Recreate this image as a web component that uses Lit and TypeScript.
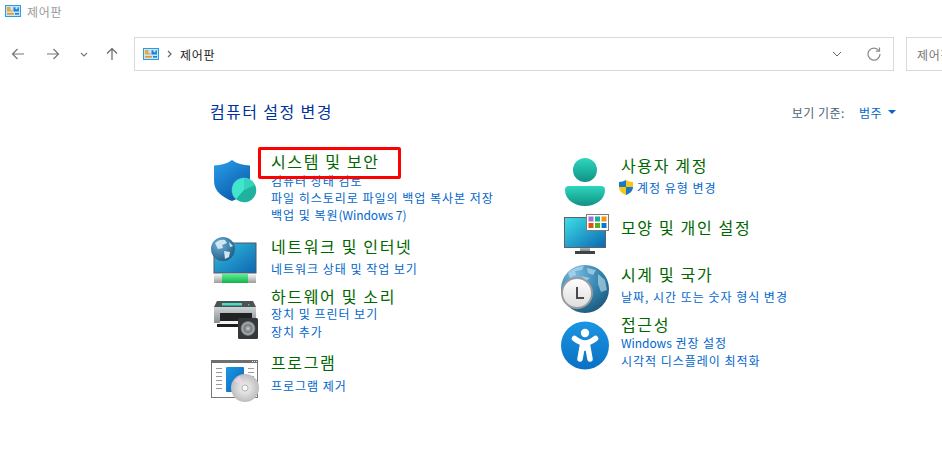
import { LitElement, html, css, svg } from "lit";
import { customElement } from "lit/decorators.js";

const cpIcon = html`<svg class="cp" viewBox="0 0 16 12" width="16" height="12">
  <rect x="0.5" y="0.5" width="15" height="11" fill="#c3e8fb" stroke="#2a9be0"/>
  <path d="M2 2h3.5v3.2h2.2v1.3H2z" fill="#f3a23a"/>
  <path d="M8.5 2.2h2v2h2v-2h1.4v4.2H8.5z" fill="#1c7fd0"/>
  <rect x="2" y="8" width="7" height="1.6" fill="#ef9320"/>
  <rect x="10" y="8" width="4" height="1.6" fill="#1c7fd0"/>
</svg>`;

const shield = svg`
  <defs><linearGradient id="sh" x1="0" y1="0" x2="0.6" y2="1"><stop offset="0" stop-color="#2aa0ea"/><stop offset="1" stop-color="#0a5cab"/></linearGradient></defs>
  <path d="M22 0C27 4 33 5 40 5.500V21C40 31 32 37 22 41C12 37 4 31 4 21V5.500C11 5 17 4 22 0Z" fill="url(#sh)"/>
  <circle cx="34" cy="30" r="12.500" fill="#fff" opacity=".25"/>
  <circle cx="34" cy="30" r="12" fill="#3fe6cc"/>
  <path d="M34 30V18A12 12 0 0 1 45 25Z" fill="#35d3bb"/>
  <path d="M34 30L45 25A12 12 0 0 1 26 39Z" fill="#1fb29f"/>`;

const network = svg`
  <defs>
    <linearGradient id="ns" x1="0" y1="0" x2="1" y2="1"><stop offset="0" stop-color="#36c0dd"/><stop offset="1" stop-color="#0c66b2"/></linearGradient>
    <linearGradient id="ng" x1="0" y1="0" x2="0" y2="1"><stop offset="0" stop-color="#5df093"/><stop offset="1" stop-color="#16b04f"/></linearGradient>
    <linearGradient id="nw" x1="0" y1="0" x2="0" y2="1"><stop offset="0" stop-color="#f6f6f6"/><stop offset="1" stop-color="#9d9d9d"/></linearGradient>
    <radialGradient id="ngl" cx=".35" cy=".3" r=".8"><stop offset="0" stop-color="#6fb0d8"/><stop offset="1" stop-color="#1c5880"/></radialGradient>
  </defs>
  <rect x="4" y="6" width="42" height="30" fill="url(#ns)" stroke="#4c5a63" stroke-width="1"/>
  <rect x="4" y="37" width="42" height="9" fill="url(#nw)"/>
  <rect x="12" y="37" width="26" height="9" fill="url(#ng)"/>
  <circle cx="13" cy="12" r="12" fill="url(#ngl)"/>
  <path d="M5 6C8 3 12 2 15 3L17 6L12 8L13 11L8 12ZM14 14L20 15L19 20L15 22ZM19 5L23 9L20 10Z" fill="#cfe6f3"/>`;

const printer = svg`
  <defs>
    <linearGradient id="pb" x1="0" y1="0" x2="0" y2="1"><stop offset="0" stop-color="#cfd4d7"/><stop offset="1" stop-color="#868c90"/></linearGradient>
    <radialGradient id="ps"><stop offset="0" stop-color="#cfd3d5"/><stop offset=".45" stop-color="#777b7e"/><stop offset=".8" stop-color="#a5a9ac"/><stop offset="1" stop-color="#555"/></radialGradient>
  </defs>
  <path d="M7 0H43L46 6H4Z" fill="#4d5154"/>
  <rect x="12" y="2" width="20" height="2.500" fill="#46dcc6"/>
  <rect x="38" y="3" width="1.500" height="1.500" fill="#35d060"/>
  <path d="M4 6H46V22H4Z" fill="url(#pb)"/>
  <rect x="10" y="12" width="32" height="8" fill="#202224"/>
  <rect x="10" y="20" width="28" height="3" fill="#f2f2f2"/>
  <rect x="7" y="23" width="28" height="3" fill="#1d1d1d"/>
  <rect x="28" y="17" width="20" height="21" rx="1.500" fill="#35383a"/>
  <circle cx="38" cy="27.500" r="7.500" fill="url(#ps)"/>`;

const program = svg`
  <defs>
    <linearGradient id="pg" x1="0" y1="0" x2="1" y2="1"><stop offset="0" stop-color="#1b98e4"/><stop offset="1" stop-color="#0b63b8"/></linearGradient>
    <radialGradient id="cd"><stop offset="0" stop-color="#f4f4f4"/><stop offset=".2" stop-color="#a8a8a8"/><stop offset=".28" stop-color="#e6e6e6"/><stop offset="1" stop-color="#bdbdbd"/></radialGradient>
  </defs>
  <rect x="1.500" y="0.500" width="46" height="37" fill="#fff" stroke="#777"/>
  <rect x="1" y="0" width="47" height="3" fill="#6f6f6f"/>
  <path d="M42 1.500h1M44 1.500h1M46 1.500h1" stroke="#e8e8e8"/>
  <path d="M6 8.500h6M6 12.500h6M6 16.500h6M6 20.500h6M6 24.500h6M6 28.500h6M38 8.500h6M38 12.500h6M38 16.500h6" stroke="#9a9a9a"/>
  <rect x="16" y="7" width="18" height="25" rx="1" fill="url(#pg)"/>
  <circle cx="35" cy="28" r="14" fill="url(#cd)"/>
  <path d="M24 21L34 26L30 16Z" fill="#f2d9ec" opacity=".7"/>
  <circle cx="35" cy="28" r="2.500" fill="#f8f8f8"/>`;

const person = svg`
  <defs><linearGradient id="pe" x1="0" y1="0" x2="0" y2="1"><stop offset="0" stop-color="#2ed6bd"/><stop offset="1" stop-color="#0f9284"/></linearGradient></defs>
  <circle cx="25" cy="13" r="12" fill="url(#pe)"/>
  <path d="M9 29H41Q45 29 45 33C45 43 35 49 25 49C15 49 5 43 5 33Q5 29 9 29Z" fill="url(#pe)"/>`;

const monitor = svg`
  <defs>
    <linearGradient id="ms" x1="0" y1="0" x2="1" y2="1"><stop offset="0" stop-color="#3ee0e4"/><stop offset="1" stop-color="#0a66b4"/></linearGradient>
    <linearGradient id="mt" x1="0" y1="0" x2="0" y2="1"><stop offset="0" stop-color="#b5babd"/><stop offset="1" stop-color="#72787c"/></linearGradient>
  </defs>
  <rect x="4.500" y="3.500" width="41" height="30" fill="url(#ms)" stroke="#5a6468"/>
  <rect x="20" y="34" width="10" height="4" fill="url(#mt)"/>
  <rect x="15" y="37" width="20" height="3" fill="#3e4346"/>
  <rect x="26.500" y="0.500" width="22" height="16" fill="#fff" stroke="#7b7b7b"/>
  <rect x="28.500" y="2.500" width="5" height="5" fill="#a070d2"/>
  <rect x="35" y="2.500" width="5" height="5" fill="#12b0a0"/>
  <rect x="41.500" y="2.500" width="5" height="5" fill="#f2930f"/>
  <rect x="28.500" y="9" width="5" height="5" fill="#e2510f"/>
  <rect x="35" y="9" width="5" height="5" fill="#55b01c"/>
  <rect x="41.500" y="9" width="5" height="5" fill="#0478d0"/>`;

const globe = svg`
  <defs>
    <radialGradient id="gg" cx=".3" cy=".2" r=".95"><stop offset="0" stop-color="#75b9df"/><stop offset=".6" stop-color="#2f7ea8"/><stop offset="1" stop-color="#1b4f6e"/></radialGradient>
    <linearGradient id="gc" x1="0" y1="0" x2="0" y2="1"><stop offset="0" stop-color="#ffffff"/><stop offset="1" stop-color="#dcdcdc"/></linearGradient>
  </defs>
  <circle cx="25" cy="24" r="24" fill="url(#gg)"/>
  <path d="M8 8C12 4 18 1 24 1L22 5L15 6L16 10L10 13ZM27 3L36 5L33 10L28 8ZM38 9L45 15L47 25L41 27L38 19ZM21 11L30 13L26 16Z" fill="#c6e3f2" opacity=".6"/>
  <circle cx="17" cy="28" r="15" fill="url(#gc)" stroke="#9c9c9c" stroke-width="2"/>
  <path d="M17 22V33H24" fill="none" stroke="#4a4a4a" stroke-width="2"/>`;

const access = svg`
  <defs><linearGradient id="ac" x1="0" y1="0" x2="0" y2="1"><stop offset="0" stop-color="#1b95e2"/><stop offset="1" stop-color="#0a70c4"/></linearGradient></defs>
  <circle cx="25" cy="27.500" r="24" fill="url(#ac)"/>
  <circle cx="25" cy="15" r="4.200" fill="#fff"/>
  <path d="M14.500 20.500C19 24 21.500 25 25 25C28.500 25 31 24 35.500 20.500M25 25V30M22.500 27L20 41M27.500 27L30 41" fill="none" stroke="#fff" stroke-width="5.500" stroke-linecap="round" stroke-linejoin="round"/>`;

const uac = html`<svg class="uac" viewBox="0 0 14 15" width="14" height="15">
  <path d="M7 0C9 1.200 11.500 2 14 2V7H7Z" fill="#f7c716"/>
  <path d="M7 0C5 1.200 2.500 2 0 2V7H7Z" fill="#1b78c8"/>
  <path d="M0 7H7V15C3.500 13.500 0 11.500 0 7Z" fill="#f7c716"/>
  <path d="M14 7H7V15C10.500 13.500 14 11.500 14 7Z" fill="#1b78c8"/>
</svg>`;

interface Item {
  h: number; iconTop: number; textTop: number; gap: number; lh: number;
  title: string; icon: unknown; links: string[]; shield?: boolean;
}

const LEFT: Item[] = [
  { h: 85, iconTop: 10, textTop: 0, gap: 0, lh: 17, title: "시스템 및 보안", icon: shield,
    links: ["컴퓨터 상태 검토", "파일 히스토리로 파일의 백업 복사본 저장", "백업 및 복원(Windows 7)"] },
  { h: 50, iconTop: 2, textTop: 0, gap: 3, lh: 17, title: "네트워크 및 인터넷", icon: network,
    links: ["네트워크 상태 및 작업 보기"] },
  { h: 66, iconTop: 16, textTop: 0, gap: -2, lh: 18, title: "하드웨어 및 소리", icon: printer,
    links: ["장치 및 프린터 보기", "장치 추가"] },
  { h: 50, iconTop: 9, textTop: 0, gap: 4, lh: 17, title: "프로그램", icon: program,
    links: ["프로그램 제거"] },
];

const RIGHT: Item[] = [
  { h: 58, iconTop: 3, textTop: 0, gap: 3, lh: 17, title: "사용자 계정", icon: person,
    links: ["계정 유형 변경"], shield: true },
  { h: 51, iconTop: 2, textTop: 4, gap: 0, lh: 17, title: "모양 및 개인 설정", icon: monitor, links: [] },
  { h: 50, iconTop: 2, textTop: 0, gap: 3, lh: 17, title: "시계 및 국가", icon: globe,
    links: ["날짜, 시간 또는 숫자 형식 변경"] },
  { h: 60, iconTop: 5, textTop: 0, gap: -1, lh: 18, title: "접근성", icon: access,
    links: ["Windows 권장 설정", "시각적 디스플레이 최적화"] },
];

const splitLatin = (s: string) =>
  s.split(/([A-Za-z0-9()]+(?: [0-9()]+)?)/).map((part, i) =>
    i % 2 ? html`<span class="latin">${part}</span>` : part
  );

@customElement("app-root")
export class AppRoot extends LitElement {
  static styles = css`
    :host {
      display: block;
      position: relative;
      width: 942px;
      height: 467px;
      overflow: hidden;
      background: #fff;
      font-family: "Noto Sans CJK KR", "Noto Sans", sans-serif;
      font-size: 12px;
      color: #222;
    }
    .titlebar {
      display: flex;
      align-items: center;
      height: 22px;
      padding-left: 5px;
      gap: 6px;
      color: #9a9a9a;
      font-size: 12px;
      letter-spacing: 0.7px;
    }
    .toolbar {
      display: flex;
      align-items: center;
      margin-top: 15px;
      height: 34px;
      letter-spacing: 0.7px;
    }
    .nav {
      flex: none;
      display: flex;
      justify-content: center;
      align-items: center;
      height: 34px;
    }
    .nav.wide { width: 36px; }
    .nav.wide2 { width: 34px; }
    .nav.narrow { width: 28px; }
    .address {
      flex: none;
      box-sizing: border-box;
      display: flex;
      align-items: center;
      width: 760px;
      height: 34px;
      margin-left: 8px;
      padding-left: 8px;
      border: 1px solid #d9d9d9;
      color: #222;
    }
    .crumb-sep { width: 21px; display: flex; justify-content: center; }
    .crumb { flex: 1; }
    .addr-chev { margin-right: 25px; display: flex; }
    .addr-refresh { margin-right: 12px; display: flex; }
    .search {
      box-sizing: border-box;
      flex: none;
      width: 60px;
      height: 34px;
      margin-left: 12px;
      padding-left: 10px;
      border: 1px solid #d9d9d9;
      display: flex;
      align-items: center;
      color: #767676;
      white-space: nowrap;
    }
    .header {
      display: flex;
      align-items: center;
      justify-content: space-between;
      box-sizing: border-box;
      width: 896px;
      margin-top: 29px;
      height: 22px;
      padding-left: 210px;
    }
    .heading { font-size: 16px; color: #003399; letter-spacing: 1.4px; }
    .view { display: flex; align-items: center; margin-top: 2px; color: #4c6478; letter-spacing: 0.5px; }
    .view-val { margin-left: 14px; color: #0066cc; }
    .caret {
      margin-left: 6px;
      width: 0;
      height: 0;
      border-left: 4px solid transparent;
      border-right: 4px solid transparent;
      border-top: 4px solid #0066cc;
    }
    .columns {
      display: grid;
      grid-template-columns: 350px 350px;
      padding-left: 210px;
      margin-top: 28px;
    }
    .col-right { padding-top: 4px; }
    .item { display: grid; grid-template-columns: 61px 1fr; }
    .item svg.ic { display: block; overflow: visible; width: 50px; height: 50px; }
    .title {
      font-size: 16px;
      line-height: 22px;
      height: 22px;
      color: #006600;
      letter-spacing: 1.65px;
      white-space: nowrap;
    }
    .links { display: flex; flex-direction: column; }
    .link { color: #0066cc; letter-spacing: 0.98px; white-space: pre; display: flex; align-items: center; }
    .latin { letter-spacing: -0.05px; }
    .uac { margin: 0 4px 0 -2px; }
    .cp { display: block; }
    .redbox {
      position: absolute;
      left: 258px;
      top: 147px;
      width: 143px;
      height: 32px;
      box-sizing: border-box;
      border: 3px solid #ff0000;
      border-radius: 2px;
    }
  `;

  private renderItem(it: Item) {
    return html`<div class="item" style="height:${it.h}px">
      <div style="padding-top:${it.iconTop}px"><svg class="ic" viewBox="0 0 50 50">${it.icon}</svg></div>
      <div style="padding-top:${it.textTop}px">
        <div class="title">${it.title}</div>
        <div class="links" style="margin-top:${it.gap}px">
          ${it.links.map(
            (l) => html`<div class="link" style="height:${it.lh}px;line-height:${it.lh}px">${it.shield ? uac : ""}<span>${splitLatin(l)}</span></div>`
          )}
        </div>
      </div>
    </div>`;
  }

  render() {
    return html`
      <div class="titlebar">${cpIcon}<span>제어판</span></div>
      <div class="toolbar">
        <div class="nav wide"><svg width="14" height="14" viewBox="0 0 14 14"><path d="M13 7H1.500M6.500 2L1.500 7L6.500 12" fill="none" stroke="#767676" stroke-width="1.200"/></svg></div>
        <div class="nav wide2"><svg width="14" height="14" viewBox="0 0 14 14"><path d="M1 7H12.500M7.500 2L12.500 7L7.500 12" fill="none" stroke="#767676" stroke-width="1.200"/></svg></div>
        <div class="nav narrow"><svg width="8" height="5" viewBox="0 0 8 5"><path d="M1 1L4 4L7 1" fill="none" stroke="#767676" stroke-width="1.100"/></svg></div>
        <div class="nav narrow"><svg width="14" height="14" viewBox="0 0 14 14"><path d="M7 13V1.500M2 6.500L7 1.500L12 6.500" fill="none" stroke="#666" stroke-width="1.200"/></svg></div>
        <div class="address">
          ${cpIcon}
          <div class="crumb-sep"><svg width="5" height="8" viewBox="0 0 5 8"><path d="M1 1L4 4L1 7" fill="none" stroke="#666" stroke-width="1.200"/></svg></div>
          <div class="crumb">제어판</div>
          <div class="addr-chev"><svg width="10" height="6" viewBox="0 0 10 6"><path d="M1 1L5 5L9 1" fill="none" stroke="#666" stroke-width="1"/></svg></div>
          <div class="addr-refresh"><svg width="14" height="14" viewBox="0 0 14 14"><path d="M11.800 3.500A6 6 0 1 0 13 7" fill="none" stroke="#8a8a8a" stroke-width="1.200"/><path d="M12.500 0.500V4.200H8.800" fill="none" stroke="#8a8a8a" stroke-width="1.200"/></svg></div>
        </div>
        <div class="search">제어판</div>
      </div>
      <div class="header">
        <div class="heading">컴퓨터 설정 변경</div>
        <div class="view"><span>보기 기준:</span><span class="view-val">범주</span><span class="caret"></span></div>
      </div>
      <div class="columns">
        <div class="col-left">${LEFT.map((i) => this.renderItem(i))}</div>
        <div class="col-right">${RIGHT.map((i) => this.renderItem(i))}</div>
      </div>
      <div class="redbox"></div>
    `;
  }
}
